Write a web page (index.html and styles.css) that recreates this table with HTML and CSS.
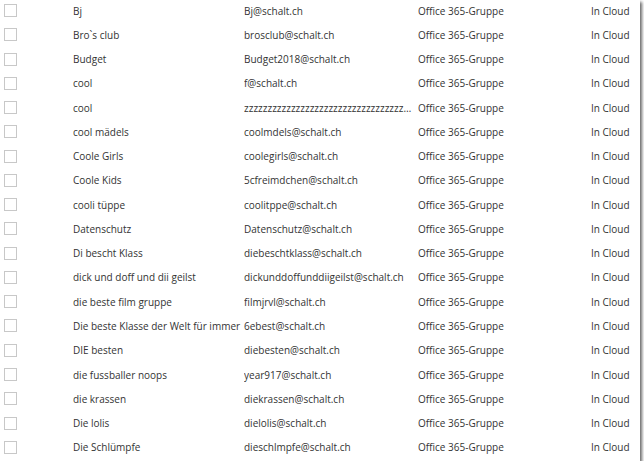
FILE: index.html
```html
<!DOCTYPE html>
<html lang="de">
<head>
  <meta charset="UTF-8" />
  <meta name="viewport" content="width=device-width, initial-scale=1" />
  <title>Gruppen</title>
  <link rel="stylesheet" href="styles.css">
</head>
<body>
  <div class="frame">
    <div class="list">
      <div class="row"><span class="check"></span><span>Bj</span><span>Bj@schalt.ch</span><span>Office 365-Gruppe</span><span>In Cloud</span></div>
      <div class="row"><span class="check"></span><span>Bro`s club</span><span>brosclub@schalt.ch</span><span>Office 365-Gruppe</span><span>In Cloud</span></div>
      <div class="row"><span class="check"></span><span>Budget</span><span>Budget2018@schalt.ch</span><span>Office 365-Gruppe</span><span>In Cloud</span></div>
      <div class="row"><span class="check"></span><span>cool</span><span>f@schalt.ch</span><span>Office 365-Gruppe</span><span>In Cloud</span></div>
      <div class="row"><span class="check"></span><span>cool</span><span class="cut">zzzzzzzzzzzzzzzzzzzzzzzzzzzzzzzzzzzzzzzzzzzzzzzzzz@schalt.ch</span><span>Office 365-Gruppe</span><span>In Cloud</span></div>
      <div class="row"><span class="check"></span><span>cool mädels</span><span>coolmdels@schalt.ch</span><span>Office 365-Gruppe</span><span>In Cloud</span></div>
      <div class="row"><span class="check"></span><span>Coole Girls</span><span>coolegirls@schalt.ch</span><span>Office 365-Gruppe</span><span>In Cloud</span></div>
      <div class="row"><span class="check"></span><span>Coole Kids</span><span>5cfreimdchen@schalt.ch</span><span>Office 365-Gruppe</span><span>In Cloud</span></div>
      <div class="row"><span class="check"></span><span>cooli tüppe</span><span>coolitppe@schalt.ch</span><span>Office 365-Gruppe</span><span>In Cloud</span></div>
      <div class="row"><span class="check"></span><span>Datenschutz</span><span>Datenschutz@schalt.ch</span><span>Office 365-Gruppe</span><span>In Cloud</span></div>
      <div class="row"><span class="check"></span><span>Di bescht Klass</span><span>diebeschtklass@schalt.ch</span><span>Office 365-Gruppe</span><span>In Cloud</span></div>
      <div class="row"><span class="check"></span><span>dick und doff und dii geilst</span><span>dickunddoffunddiigeilst@schalt.ch</span><span>Office 365-Gruppe</span><span>In Cloud</span></div>
      <div class="row"><span class="check"></span><span>die beste film gruppe</span><span>filmjrvl@schalt.ch</span><span>Office 365-Gruppe</span><span>In Cloud</span></div>
      <div class="row"><span class="check"></span><span>Die beste Klasse der Welt für immer</span><span>6ebest@schalt.ch</span><span>Office 365-Gruppe</span><span>In Cloud</span></div>
      <div class="row"><span class="check"></span><span>DIE besten</span><span>diebesten@schalt.ch</span><span>Office 365-Gruppe</span><span>In Cloud</span></div>
      <div class="row"><span class="check"></span><span>die fussballer noops</span><span>year917@schalt.ch</span><span>Office 365-Gruppe</span><span>In Cloud</span></div>
      <div class="row"><span class="check"></span><span>die krassen</span><span>diekrassen@schalt.ch</span><span>Office 365-Gruppe</span><span>In Cloud</span></div>
      <div class="row"><span class="check"></span><span>Die lolis</span><span>dielolis@schalt.ch</span><span>Office 365-Gruppe</span><span>In Cloud</span></div>
      <div class="row"><span class="check"></span><span>Die Schlümpfe</span><span>dieschlmpfe@schalt.ch</span><span>Office 365-Gruppe</span><span>In Cloud</span></div>
    </div>
  </div>
</body>
</html>
```

FILE: styles.css
```css
body {
  margin: 0;
  background: #fff;
  font-family: "Open Sans", Arial, sans-serif;
  font-size: 10px;
  color: #333;
}
.frame {
  width: 640px;
  height: 461px;
  overflow: hidden;
  background: #fff;
  box-shadow: 2px 2px 3px rgba(0, 0, 0, 0.6);
}
.list {
  margin-top: -1.6px;
}
.row {
  display: grid;
  grid-template-columns: 73px 171px 174px 173px 1fr;
  align-items: center;
  height: 24.28px;
  white-space: nowrap;
}
.row > span {
  overflow: hidden;
}
.check {
  display: block;
  width: 11px;
  height: 11px;
  margin-left: 4px;
  border: 1px solid #c8c8c8;
}
.cut {
  text-overflow: ellipsis;
  padding-right: 4px;
}
```
